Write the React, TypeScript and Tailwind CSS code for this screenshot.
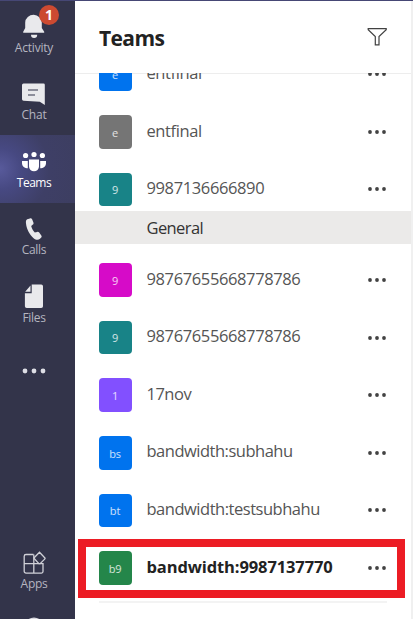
import React from "react";

type Team = {
  initials: string;
  name: string;
  color: string;
  tracking: string;
  channel?: string;
  active?: boolean;
};

const teams: Team[] = [
  { initials: "e", name: "entfinal", color: "bg-[#0073ee]", tracking: "tracking-[-0.4px]" },
  { initials: "e", name: "entfinal", color: "bg-[#757575]", tracking: "tracking-[-0.4px]" },
  { initials: "9", name: "9987136666890", color: "bg-[#188387]", tracking: "tracking-[-0.38px]", channel: "General" },
  { initials: "9", name: "98767655668778786", color: "bg-[#d60bc8]", tracking: "tracking-[-0.38px]" },
  { initials: "9", name: "98767655668778786", color: "bg-[#188387]", tracking: "tracking-[-0.38px]" },
  { initials: "1", name: "17nov", color: "bg-[#8250ff]", tracking: "tracking-[-0.5px]" },
  { initials: "bs", name: "bandwidth:subhahu", color: "bg-[#0073ee]", tracking: "tracking-[-0.49px]" },
  { initials: "bt", name: "bandwidth:testsubhahu", color: "bg-[#0073ee]", tracking: "tracking-[-0.48px]" },
  { initials: "b9", name: "bandwidth:9987137770", color: "bg-[#24864a]", tracking: "tracking-[-0.11px]", active: true },
];

function Dots() {
  return (
    <svg width="20" height="6" viewBox="0 0 20 6" fill="#424242" className="shrink-0">
      <circle cx="3" cy="3" r="1.9" />
      <circle cx="10" cy="3" r="1.9" />
      <circle cx="17" cy="3" r="1.9" />
    </svg>
  );
}

function TeamRow({ team }: { team: Team }) {
  return (
    <>
      <div className={`flex h-[33.6px] shrink-0 items-center pl-6 pr-[24px] ${team.channel ? "mb-[5px]" : "mb-6"}`}>
        <div className={`flex h-full w-[33px] items-center justify-center rounded-[4px] pr-px pt-[2px] text-[11px] tracking-[-0.2px] text-white/80 ${team.color}`}>
          {team.initials}
        </div>
        <span className={`ml-[14.5px] -mt-[2.6px] flex-1 whitespace-nowrap text-[16.5px] leading-6 ${team.tracking} ${team.active ? "font-bold text-[#222]" : "font-normal text-[#555]"}`}>
          {team.name}
        </span>
        <Dots />
      </div>
      {team.channel && (
        <div className="mb-[19px] flex h-[33px] shrink-0 items-center bg-[#ebeae9] pl-[71.5px] pt-[2px] text-[16.5px] font-normal tracking-[-0.6px] text-[#333]">
          {team.channel}
        </div>
      )}
    </>
  );
}

function NavItem({ label, children, selected, tracking }: { label: string; children: React.ReactNode; selected?: boolean; tracking: string }) {
  return (
    <div className={`flex h-[67.5px] shrink-0 flex-col items-center pr-[7px] pt-[13px] ${selected ? "bg-[radial-gradient(circle_at_0%_50%,#585a9b_0%,#474982_25%,#3e3f66_60%,#3d3e61_100%)] text-white" : "text-[#b5b5c0]"}`}>
      <svg width="28" height="28" viewBox="0 0 28 28" className="shrink-0 overflow-visible" fill={selected ? "#fff" : "#e9e9ec"}>
        {children}
      </svg>
      <span className={`-mt-[1.5px] text-[12px] leading-4 ${tracking}`}>{label}</span>
    </div>
  );
}

export default function App() {
  return (
    <div className="flex h-[619px] w-[413px] overflow-hidden border-t border-[#464775] bg-white font-['Open_Sans','Noto_Sans',sans-serif]">
      <nav className="flex h-full w-[75px] shrink-0 flex-col overflow-hidden bg-[#33344a]">
        <div className="relative -mt-[1px]">
          <NavItem label="Activity" tracking="tracking-[-0.2px]">
            <path d="M3.2 19.8v-1.1L5.2 15V9.6a8.4 8 0 0 1 8.5-7.8 8.4 8 0 0 1 8.1 7.8V15l2.4 3.7v1.1Z" />
            <path d="M11 21.7h6.200a3.100 3.300 0 0 1-6.200 0Z" />
          </NavItem>
          <span className="absolute left-[39px] top-[5px] flex h-5 w-5 items-center justify-center rounded-full bg-[#cc4a31] text-[14px] font-bold leading-none text-white">1</span>
        </div>
        <NavItem label="Chat" tracking="tracking-[-0.2px]">
          <path d="M3.5 2.5h20a1.3 1.3 0 0 1 1.3 1.3V24l-5-3.2L3.500 19.700A1.5 1.5 0 0 1 2 18.300V4a1.5 1.5 0 0 1 1.5-1.5Z" />
          <path d="M8 9h10M8 14h7" stroke="#33344a" strokeWidth="1.1" />
        </NavItem>
        <NavItem label="Teams" selected tracking="tracking-[-0.5px]">
          <circle cx="5.6" cy="7.500" r="2.600" />
          <circle cx="14" cy="6.500" r="2.600" />
          <circle cx="22.4" cy="7.500" r="2.600" />
          <path d="M2 13h5.800v7.200h-1A4.800 4.800 0 0 1 2 15.500ZM26 13h-5.800v7.200h1A4.800 4.800 0 0 0 26 15.500ZM9 11.500h10v7a5 4.800 0 0 1-10 0Z" />
        </NavItem>
        <NavItem label="Calls" tracking="tracking-[-0.3px]">
          <path transform="translate(0.700 0)" d="m6.500 3.200 2.700-.8c1-.3 1.800 0 2.200.9l1.300 3.200c.3.800.1 1.600-.5 2.100l-1.700 1.500c.6 2.400 1.800 4.600 3.600 6.500l2.400-.7c.8-.2 1.500 0 2 .7l2.100 2.800c.5.700.5 1.600-.1 2.200l-1.200 1.200c-1.600 1.500-4.100 1.400-6.400-.6C9 18.700 5.900 13.500 5.300 7.600 5.100 5.500 5.100 3.800 6.500 3.200Z" />
        </NavItem>
        <NavItem label="Files" tracking="tracking-[-0.3px]">
          <path transform="translate(-0.300 -0.600)" d="M12 2h9.500a1.800 1.800 0 0 1 1.800 1.800v20a1.800 1.800 0 0 1-1.800 1.800H7a1.800 1.800 0 0 1-1.800-1.800V10.800h6.800ZM5.500 9.300 10.800 3v6.300Z" />
        </NavItem>
        <svg width="68" height="50" viewBox="0 0 68 50" fill="#dedee5" className="shrink-0">
          <circle cx="25" cy="33" r="2.400" />
          <circle cx="34" cy="33" r="2.400" />
          <circle cx="43" cy="33" r="2.400" />
        </svg>
        <div className="mt-auto">
          <NavItem label="Apps" tracking="tracking-[-0.3px]">
            <g fill="none" stroke="#d0d0d7" strokeWidth="1.300">
              <path d="M13.500 4.500H6A1.800 1.800 0 0 0 4.200 6.300v15A1.800 1.800 0 0 0 6 23.100h15.500a1.500 1.500 0 0 0 1.500-1.500v-8H4.200M13.800 4.500v18.600" />
              <path d="m19.500 2.300 5.200 5.400c.5.500.5.900 0 1.400l-4.600 4.500h-1.200l-4.500-4.800c-.4-.4-.4-.9 0-1.300l5.100-5.200Z" />
            </g>
          </NavItem>
        </div>
        <svg width="68" height="15" viewBox="0 0 68 15" className="shrink-0">
          <circle cx="34" cy="23.500" r="10" fill="#d9d9df" />
        </svg>
      </nav>

      <main className="relative flex h-full min-w-0 flex-1 flex-col border-r-2 border-[#f0f0f0] bg-white">
        <header className="-mb-px flex h-[73px] shrink-0 items-center justify-between border-b border-[#ededed] pl-6 pr-[23px]">
          <h1 className="pt-[2px] text-[21px] font-bold leading-7 tracking-[-0.6px] text-[#222]">Teams</h1>
          <svg width="22" height="20" viewBox="0 0 22 20" fill="none" stroke="#424242" strokeWidth="1.200" className="-mt-px">
            <path d="M2.200 1.600h18v1.200l-7.200 6.800v8.200H9.300V9.600L2.200 2.800Z" />
          </svg>
        </header>
        <section className="flex min-h-0 flex-1 flex-col overflow-hidden">
          <div className="-mt-[15.600px] flex flex-col">
            {teams.map((team, i) => (
              <TeamRow key={i} team={team} />
            ))}
          </div>
          <div className="-mt-[8px] ml-6 mr-[24px] h-[2px] shrink-0 bg-[#f3f3f3]" />
        </section>
        <div className="pointer-events-none absolute left-[3px] top-[538px] h-[59px] w-[327px] border-8 border-[#ec1c24]" />
      </main>
    </div>
  );
}
